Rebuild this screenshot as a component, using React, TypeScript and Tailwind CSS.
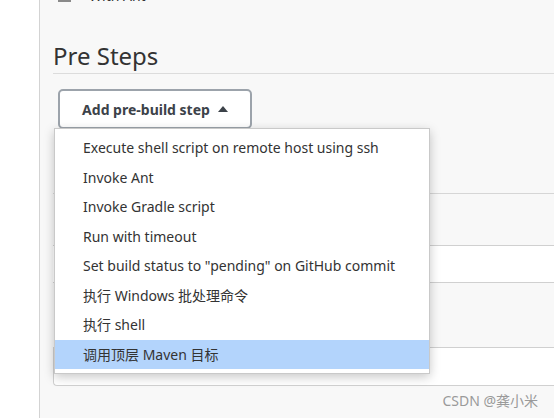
import React from 'react';

const steps = [
  'Execute shell script on remote host using ssh',
  'Invoke Ant',
  'Invoke Gradle script',
  'Run with timeout',
  'Set build status to "pending" on GitHub commit',
  '执行 Windows 批处理命令',
  '执行 shell',
  '调用顶层 Maven 目标',
];

const font = "font-['Noto_Sans','Noto_Sans_CJK_SC',sans-serif]";

export default function App() {
  return (
    <div className={`flex w-[554px] h-[418px] overflow-hidden bg-white text-[#333] ${font}`}>
      {/* side nav edge */}
      <div className="w-[40px] shrink-0 bg-white border-r border-[#d3d3d3]" />

      <div className="relative flex-1 bg-[#f8f8f8] pl-[13px]">
        {/* cut-off option row above */}
        <div className="flex items-start h-[3px] overflow-hidden">
          <div className="ml-[5px] w-[13px] h-[2px] bg-[#8a8a8a]" />
          <span className="ml-[18px] text-[14px] leading-[14px] -translate-y-[11px]">With Ant</span>
        </div>

        <h2 className="mt-[37px] text-[24px] leading-[32px] border-b border-[#dcdcdc] pb-[1px]">Pre Steps</h2>

        <button className="mt-[15px] ml-[5px] h-[40px] w-[194px] flex items-center justify-center gap-[8px] rounded-[5px] border-2 border-[#9ca3ab] bg-white text-[14px] font-bold text-[#3c4249]">
          Add pre-build step
          <svg width="10" height="6" viewBox="0 0 10 6" className="mb-[1px]">
            <path d="M0 6 L5 0 L10 6 Z" fill="#3c4249" />
          </svg>
        </button>

        {/* section underneath the menu */}
        <div className="mt-[64px] border-t border-[#d6d6d6] h-[52px]" />
        <div className="h-[38px] bg-white border-y border-[#d0d0d0]" />
        <div className="h-[64px]" />
        <div className="h-[39px] bg-white border border-r-0 border-[#d0d0d0] rounded-bl-[4px]" />

        {/* dropdown menu */}
        <div className="absolute left-[14px] top-[128px] w-[376px] bg-white border border-[#c9c9c9] pt-[4px] pb-[4px] shadow-[0_3px_10px_rgba(0,0,0,0.22)]">
          {steps.map((s, i) => (
            <div
              key={s}
              className={`h-[29.5px] flex items-center pl-[28px] text-[14px] text-[#333] ${i === steps.length - 1 ? 'bg-[#b3d4fc]' : ''}`}
            >
              {s}
            </div>
          ))}
        </div>

        <span className="absolute right-[16px] bottom-[7px] text-[14px] text-[#9a9a9a]">CSDN @龚小米</span>
      </div>
    </div>
  );
}
